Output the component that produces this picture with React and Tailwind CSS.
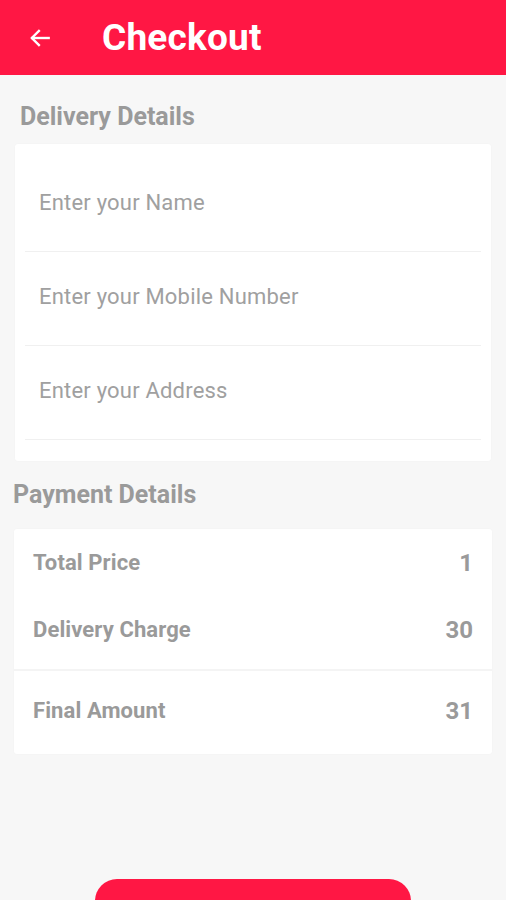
import React from 'react';

const campos = [
    { id: "nombre", placeholder: "Enter your Name" },
    { id: "telefono", placeholder: "Enter your Mobile Number" },
    { id: "direccion", placeholder: "Enter your Address" },
];

const Fila = ({ titulo, valor }) => (
    <div className='h-[28px] flex items-center justify-between pl-[19px] pr-[19px]'>
        <span className='text-[22px] font-bold text-[#9a9a9a] leading-none tracking-[0.1px]'>{titulo}</span>
        <span className='text-[24px] font-bold text-[#9a9a9a] leading-none'>{valor}</span>
    </div>
);

const App = () => {
    return (
        <div className='bg-[#f7f7f7] font-["Roboto","Noto_Sans",sans-serif] overflow-hidden h-[900px]'>
            {/* Barra superior */}
            <header className='h-[75px] bg-[#ff1744] flex items-center'>
                <button className='ml-[26px] w-[28px] h-[28px] flex items-center justify-center text-white'>
                    <svg width="26" height="26" viewBox="0 0 24 24" fill="none" stroke="currentColor" strokeWidth="2.2" strokeLinecap="square">
                        <path d="M20 12H5" />
                        <path d="M11 5.5 4.5 12l6.5 6.5" />
                    </svg>
                </button>
                <h1 className='ml-[48px] text-white text-[37px] font-bold leading-none tracking-[0.2px]'>Checkout</h1>
            </header>

            {/* Datos de entrega */}
            <h2 className='mt-[28px] ml-[20px] text-[25px] font-bold text-[#9a9a9a] leading-[28px]'>Delivery Details</h2>
            <div className='mx-[15px] mt-[13px] bg-white rounded-[3px] px-[10px] pt-[14px] pb-[21px] shadow-[0_0_2px_rgba(0,0,0,0.03)]'>
                {campos.map(campo => (
                    <div key={campo.id} className='h-[94px] border-b border-[#f0f0f0] flex items-center'>
                        <input
                            id={campo.id}
                            type="text"
                            placeholder={campo.placeholder}
                            className='w-full pl-[14px] text-[22px] tracking-[0.2px] text-[#666] placeholder:text-[#a0a0a0] bg-transparent outline-none -mt-[4px]'
                        />
                    </div>
                ))}
            </div>

            {/* Datos de pago */}
            <h2 className='mt-[20px] ml-[13px] text-[25px] font-bold text-[#9a9a9a] leading-[28px]'>Payment Details</h2>
            <div className='mx-[14px] mt-[20px] bg-white rounded-[3px] shadow-[0_0_2px_rgba(0,0,0,0.03)]'>
                <div className='pt-[20px] pb-[25px] flex flex-col gap-[39px] border-b-2 border-[#f4f4f4]'>
                    <Fila titulo="Total Price" valor="1" />
                    <Fila titulo="Delivery Charge" valor="30" />
                </div>
                <div className='pt-[26px] pb-[29px]'>
                    <Fila titulo="Final Amount" valor="31" />
                </div>
            </div>

            {/* Botón de pedido, solo se ve el borde superior */}
            <div className='flex justify-center mt-[125px]'>
                <button aria-label="Place Order" className='w-[316px] h-[60px] bg-[#ff1744] rounded-[22px]'></button>
            </div>
        </div>
    );
};

export default App;
